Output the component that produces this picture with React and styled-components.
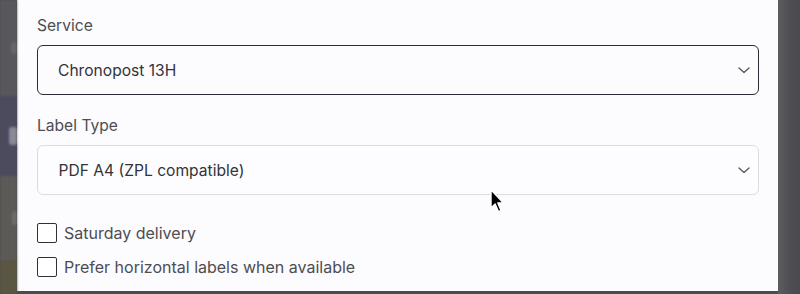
import React from "react";
import styled, { createGlobalStyle } from "styled-components";

const Global = createGlobalStyle`
  html, body { margin: 0; padding: 0; }
  body { width: 800px; height: 294px; overflow: hidden; font-family: Inter, "Noto Sans", sans-serif; }
`;

const Screen = styled.div`
  position: relative;
  width: 800px;
  height: 294px;
  display: grid;
  grid-template-columns: 17px 761px 22px;
  background: #4c4c50;
  overflow: hidden;
`;

const BackdropStrip = styled.div`
  display: flex;
  flex-direction: column;
  filter: blur(1.2px);
  box-shadow: inset -4px 0 6px rgba(0,0,0,0.25);
`;

const Band = styled.div`
  height: ${(p) => p.$h}px;
  background: ${(p) => p.$bg};
  display: flex;
  align-items: center;
  justify-content: flex-end;
`;

const Smudge = styled.span`
  width: ${(p) => p.$w}px;
  height: ${(p) => p.$hh}px;
  background: ${(p) => p.$c};
  border-radius: 3px;
`;

const RightStrip = styled.div`
  background: linear-gradient(90deg, #5c5c60 0%, #4e4e52 60%, #4a4a4e 100%);
`;

const Modal = styled.div`
  height: 291px;
  background: #fcfbfe;
  display: flex;
  flex-direction: column;
  padding: 17px 19px 0 20px;
  box-sizing: border-box;
`;

const Field = styled.div`
  display: flex;
  flex-direction: column;
  gap: 10px;
  margin-bottom: ${(p) => p.$mb}px;
`;

const Label = styled.div`
  font-size: 15.6px;
  line-height: 18px;
  color: #4d4d52;
`;

const SelectBox = styled.div`
  height: 50px;
  box-sizing: border-box;
  border: ${(p) => (p.$focused ? "1.5px solid #2b2a36" : "1px solid #dcdce2")};
  border-radius: 6px;
  background: ${(p) => (p.$focused ? "#fcfbfe" : "#fdfdff")};
  display: flex;
  align-items: center;
  justify-content: space-between;
  padding: 0 6px 0 ${(p) => (p.$focused ? 20 : 20.5)}px;
  font-size: 15.6px;
  color: #333338;
`;

const Chevron = () => (
  <svg width="16" height="16" viewBox="0 0 16 16" fill="none">
    <path d="M3 6l5 4.5L13 6" stroke="#55555a" strokeWidth="1.3" strokeLinecap="round" strokeLinejoin="round" />
  </svg>
);

const Checks = styled.div`
  display: flex;
  flex-direction: column;
  gap: 14px;
`;

const CheckRow = styled.label`
  display: flex;
  align-items: center;
  gap: 7px;
  height: 20px;
  font-size: 16px;
  line-height: 20px;
  color: #4d4d52;
`;

const Box = styled.span`
  width: 20px;
  height: 20px;
  box-sizing: border-box;
  border: 1.5px solid #2f2f38;
  border-radius: 2px;
  background: #fff;
  flex: none;
`;

const Cursor = styled.svg`
  position: absolute;
  left: 489px;
  top: 188px;
`;

export default function App() {
  return (
    <>
      <Global />
      <Screen>
        <BackdropStrip>
          <Band $h={96} $bg="#58585c"><Smudge $w={6} $hh={12} $c="#66666a" /></Band>
          <Band $h={80} $bg="#4b4a5e"><Smudge $w={8} $hh={18} $c="#8a8a96" /></Band>
          <Band $h={84} $bg="#5b5a57"><Smudge $w={5} $hh={14} $c="#6e6d68" /></Band>
          <Band $h={34} $bg="#5a5642" />
        </BackdropStrip>
        <Modal>
          <Field $mb={22}>
            <Label>Service</Label>
            <SelectBox $focused>
              <span>Chronopost 13H</span>
              <Chevron />
            </SelectBox>
          </Field>
          <Field $mb={28}>
            <Label>Label Type</Label>
            <SelectBox>
              <span>PDF A4 (ZPL compatible)</span>
              <Chevron />
            </SelectBox>
          </Field>
          <Checks>
            <CheckRow><Box />Saturday delivery</CheckRow>
            <CheckRow><Box />Prefer horizontal labels when available</CheckRow>
          </Checks>
        </Modal>
        <RightStrip />
        <Cursor width="17" height="26" viewBox="0 0 14 22">
          <path d="M1.5 1.5 L1.5 17 L5 13.5 L7.8 20 L10 19 L7.3 12.6 L12 12.6 Z" fill="#000" stroke="#fff" strokeWidth="1.2" strokeLinejoin="round" />
        </Cursor>
      </Screen>
    </>
  );
}
